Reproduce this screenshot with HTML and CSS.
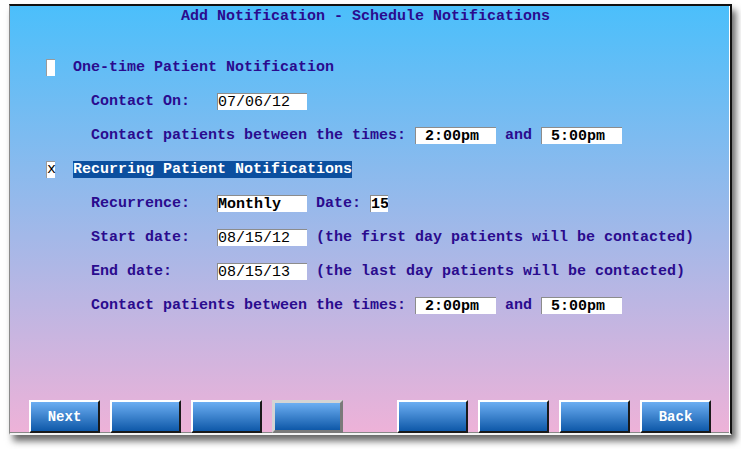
FILE: index.html
```html
<!DOCTYPE html>
<html>
<head>
  <meta charset="UTF-8">
  <title>Add Notification - Schedule Notifications</title>
  <link rel="stylesheet" href="styles.css">
</head>
<body>
  <div class="window">
    <div class="title">Add Notification - Schedule Notifications</div>

    <div class="form">
      <div class="row main">
        <span class="check"></span>
        <span class="heading">One-time Patient Notification</span>
      </div>
      <div class="row sub">
        <span class="label">Contact On:</span>
        <input class="field w10 thin" type="text" value="07/06/12">
      </div>
      <div class="row sub">
        <span class="label long">Contact patients between the times:</span>
        <input class="field w9" type="text" value=" 2:00pm">
        <span class="and">and</span>
        <input class="field w9" type="text" value=" 5:00pm">
      </div>

      <div class="row main">
        <span class="check">x</span>
        <span class="heading selected">Recurring Patient Notifications</span>
      </div>
      <div class="row sub">
        <span class="label">Recurrence:</span>
        <input class="field w10" type="text" value="Monthly">
        <span class="note">Date:</span>
        <input class="field w2" type="text" value="15">
      </div>
      <div class="row sub">
        <span class="label">Start date:</span>
        <input class="field w10 thin" type="text" value="08/15/12">
        <span class="note">(the first day patients will be contacted)</span>
      </div>
      <div class="row sub">
        <span class="label">End date:</span>
        <input class="field w10 thin" type="text" value="08/15/13">
        <span class="note">(the last day patients will be contacted)</span>
      </div>
      <div class="row sub">
        <span class="label long">Contact patients between the times:</span>
        <input class="field w9" type="text" value=" 2:00pm">
        <span class="and">and</span>
        <input class="field w9" type="text" value=" 5:00pm">
      </div>
    </div>

    <div class="buttons">
      <div class="group">
        <button class="btn">Next</button>
        <button class="btn"></button>
        <button class="btn"></button>
        <button class="btn focus"></button>
      </div>
      <div class="group">
        <button class="btn"></button>
        <button class="btn"></button>
        <button class="btn"></button>
        <button class="btn">Back</button>
      </div>
    </div>
  </div>
</body>
</html>
```

FILE: styles.css
```css
/* Terminal style screen, 9px character grid */
body {
  margin: 0;
  height: 449px;
  background: #fff;
  font-family: "Liberation Mono", "Courier New", monospace;
  font-size: 15px;
  font-weight: bold;
}
.window {
  margin: 4px 0 0 9px;
  width: 720px;
  height: 427px;
  display: flex;
  flex-direction: column;
  background: linear-gradient(#4bbffb, #eeb2d8);
  border-top: 2px solid #111;
  border-left: 1px solid #8a8a8a;
  border-right: 2px solid #111;
  border-bottom: 2px solid #f4f4f4;
  box-shadow: inset -1px 0 #fff, inset 0 -1px #888, 4px 6px 7px rgba(0,0,0,0.6);
  color: #2a0b8e;
}
.title {
  margin-top: 2px;
  height: 17px;
  line-height: 17px;
  text-align: center;
  padding-right: 9px;
}
.form {
  margin-top: 34px;
  display: flex;
  flex-direction: column;
  gap: 17px;
}
.row {
  display: flex;
  align-items: center;
  height: 17px;
  line-height: 17px;
  white-space: pre;
}
.row.main {
  padding-left: 36px;
}
.row.sub {
  padding-left: 81px;
}
.check {
  width: 9px;
  height: 17px;
  margin-right: 18px;
  background: #fff;
  color: #000;
  font-weight: normal;
  box-sizing: border-box;
  border-top: 1px solid #9a9a9a;
  border-left: 1px solid #9a9a9a;
  line-height: 15px;
  text-align: center;
}
.heading.selected {
  background: #0b4f9f;
  color: #fff;
}
.label {
  width: 126px;
}
.label.long {
  width: 315px;
  margin-right: 9px;
}
.note {
  margin-left: 9px;
}
.note + .field {
  margin-left: 9px;
}
.and {
  margin: 0 9px;
}
.field {
  height: 17px;
  box-sizing: border-box;
  padding: 0;
  margin: 0;
  border: none;
  border-top: 1px solid #8c8c8c;
  border-left: 1px solid #8c8c8c;
  background: #fff;
  color: #000;
  font-family: "Liberation Mono", "Courier New", monospace;
  font-size: 15px;
  font-weight: bold;
  line-height: 16px;
  outline: none;
}
.field.thin {
  font-weight: normal;
}
.w10 { width: 90px; }
.w9 { width: 81px; }
.w2 { width: 18px; }
.buttons {
  margin-top: auto;
  padding: 0 19px;
  display: flex;
  justify-content: space-between;
}
.group {
  display: flex;
  gap: 10px;
}
.btn {
  width: 71px;
  height: 33px;
  box-sizing: border-box;
  padding: 0;
  background: linear-gradient(#6caef2, #0e58a8);
  border: 2px solid;
  border-color: #fff #1a1a1a #1a1a1a #fff;
  color: #fff;
  font-family: "Liberation Mono", "Courier New", monospace;
  font-size: 14px;
  font-weight: bold;
}
.btn.focus {
  border-width: 3px;
  border-color: #d4d4d4 #7a7a7a #7a7a7a #d4d4d4;
  background: linear-gradient(#6caef2, #0e58a8);
}
```
